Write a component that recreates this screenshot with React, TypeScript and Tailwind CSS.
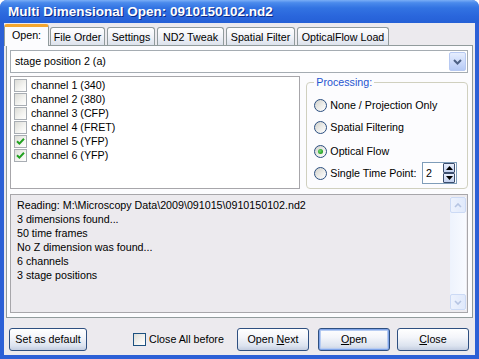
import React from "react";

function Check({ checked, dark }: { checked?: boolean; dark?: boolean }) {
  return (
    <div
      className={
        "w-[13px] h-[13px] shrink-0 border flex items-center justify-center bg-[linear-gradient(135deg,#DCDCD7_0%,#F4F4F1_60%,#FFFFFF_100%)] " +
        (dark ? "border-[#1C5180]" : "border-[#A8ADB3]")
      }
    >
      {checked && (
        <svg width="9" height="9" viewBox="0 0 9 9">
          <polyline points="1,4.2 3.4,6.6 8,1.8" fill="none" stroke="#21A121" strokeWidth="2" />
        </svg>
      )}
    </div>
  );
}

function Radio({ checked }: { checked?: boolean }) {
  return (
    <div className="w-[13px] h-[13px] shrink-0 rounded-full border border-[#2A4E80] bg-[linear-gradient(135deg,#D0D0CA_0%,#EDEDEA_55%,#FFFFFF_100%)] flex items-center justify-center">
      {checked && (
        <div className="w-[5px] h-[5px] rounded-full bg-[radial-gradient(circle_at_40%_40%,#73DC73_0%,#2CA52C_60%,#168C16_100%)]" />
      )}
    </div>
  );
}

function Btn({ children, w, def }: { children: React.ReactNode; w: string; def?: boolean }) {
  return (
    <div
      className={
        "h-[23px] shrink-0 rounded-[3px] border border-[#2E4F80] flex items-center justify-center text-[10.7px] text-black bg-[linear-gradient(to_bottom,#FFFFFF_0%,#F3F5FA_40%,#DCE3EF_80%,#C3CDE0_100%)] " +
        w +
        (def ? " shadow-[inset_0_0_0_1px_#7FA4E8,inset_0_0_0_2px_#B7CCF2]" : "")
      }
    >
      {children}
    </div>
  );
}

const tabs = [
  { label: "File Order", w: "w-[55px]" },
  { label: "Settings", w: "w-[48px]" },
  { label: "ND2 Tweak", w: "w-[67px]" },
  { label: "Spatial Filter", w: "w-[69px]" },
  { label: "OpticalFlow Load", w: "w-[92px]" },
];

const channels = [
  { label: "channel 1 (340)", c: false },
  { label: "channel 2 (380)", c: false },
  { label: "channel 3 (CFP)", c: false },
  { label: "channel 4 (FRET)", c: false },
  { label: "channel 5 (YFP)", c: true },
  { label: "channel 6 (YFP)", c: true },
];

const log = [
  "Reading: M:\\Microscopy Data\\2009\\091015\\0910150102.nd2",
  "3 dimensions found...",
  "50 time frames",
  "No Z dimension was found...",
  "6 channels",
  "3 stage positions",
];

export default function App() {
  return (
    <div className="w-[479px] h-[359px] bg-[#2C60D6] rounded-t-[7px] flex flex-col overflow-hidden font-['Liberation_Sans',Arial,sans-serif] text-black">
      <div className="h-[23px] shrink-0 flex items-center pl-[8px] bg-[linear-gradient(to_bottom,#7AAEF6_0%,#4A8AEC_12%,#3273E2_35%,#2A66DC_70%,#2560D6_100%)]">
        <span className="text-white font-bold text-[13.5px] leading-none [text-shadow:1px_1px_0_#0A2A8A]">
          Multi Dimensional Open: 0910150102.nd2
        </span>
      </div>
      <div className="flex-1 mx-[4px] mb-[4px] bg-[#ECEAEE] flex flex-col pt-[1px] px-[2px]">
        {/* tabs */}
        <div className="h-[21px] shrink-0 flex items-end gap-[2px] relative z-10">
          <div className="w-[45px] h-[22px] ml-[-2px] mr-[-1px] mb-[-1px] rounded-t-[3px] border-x border-[#919B9C] border-t-[3px] border-t-[#F5A62F] bg-[#FCFCFE] flex items-center justify-center text-[10.7px] pb-[2px]">
            Open:
          </div>
          {tabs.map((t) => (
            <div
              key={t.label}
              className={
                "h-[18px] rounded-t-[3px] border border-b-0 border-[#919B9C] bg-[linear-gradient(to_bottom,#FFFFFF_0%,#F1F3F8_50%,#DCE2EC_100%)] flex items-center justify-center text-[10.7px] pt-[1px] whitespace-nowrap " +
                t.w
              }
            >
              {t.label}
            </div>
          ))}
        </div>
        {/* panel */}
        <div className="h-[273px] shrink-0 border border-[#919B9C] bg-[#FCFCFE] pt-[4px] pl-[3px] pr-[4px] flex flex-col">
          <div className="h-[23px] shrink-0 border border-[#A5ACB2] bg-white flex items-center pl-[4px] pr-[1px] text-[10.7px]">
            <span className="flex-1">stage position 2 (a)</span>
            <div className="w-[17px] h-[19px] rounded-[2px] border border-[#B7C9F2] bg-[linear-gradient(to_bottom,#E6EEFE_0%,#C9D8FA_60%,#B6CAF5_100%)] flex items-center justify-center">
              <svg width="9" height="6" viewBox="0 0 9 6">
                <polyline points="1,1 4.5,4.5 8,1" fill="none" stroke="#4D6185" strokeWidth="2" />
              </svg>
            </div>
          </div>
          <div className="h-[113px] mt-[3px] shrink-0 flex">
            <div className="w-[291px] h-full border border-[#A7A6AA] bg-white pt-[1px] pl-[3px]">
              {channels.map((ch) => (
                <div key={ch.label} className="h-[14px] flex items-center gap-[4px] text-[10.7px]">
                  <Check checked={ch.c} />
                  <span>{ch.label}</span>
                </div>
              ))}
            </div>
            <fieldset className="ml-[6px] w-[162px] h-full border border-[#D0D0BF] rounded-[4px] pl-[7px] pr-[10px]">
              <legend className="px-[2px] text-[10.7px] text-[#1F55D0] leading-[13px]">Processing:</legend>
              <div className="mt-[5px] h-[22px] flex items-center gap-[3px] text-[10.7px] whitespace-nowrap">
                <Radio />
                <span>None / Projection Only</span>
              </div>
              <div className="h-[22px] flex items-center gap-[3px] text-[10.7px] whitespace-nowrap">
                <Radio />
                <span>Spatial Filtering</span>
              </div>
              <div className="mt-[2px] h-[22px] flex items-center gap-[3px] text-[10.7px] whitespace-nowrap">
                <Radio checked />
                <span>Optical Flow</span>
              </div>
              <div className="h-[22px] flex items-center gap-[3px] text-[10.7px] whitespace-nowrap">
                <Radio />
                <span>Single Time Point:</span>
                <div className="ml-auto w-[35px] h-[22px] shrink-0 border border-[#7F9DB9] bg-white flex items-center pl-[3px] pr-[1px]">
                  <span className="flex-1 text-[10.7px]">2</span>
                  <div className="w-[12px] h-[20px] flex flex-col">
                    <div className="flex-1 border border-[#3C4E6E] rounded-[1px] bg-[linear-gradient(to_bottom,#E8EEFB,#C3D1EE)] flex items-center justify-center">
                      <svg width="7" height="4" viewBox="0 0 7 4">
                        <polygon points="0,4 3.5,0 7,4" fill="#000" />
                      </svg>
                    </div>
                    <div className="flex-1 border border-[#3C4E6E] rounded-[1px] bg-[linear-gradient(to_bottom,#E8EEFB,#C3D1EE)] flex items-center justify-center">
                      <svg width="7" height="4" viewBox="0 0 7 4">
                        <polygon points="0,0 3.5,4 7,0" fill="#000" />
                      </svg>
                    </div>
                  </div>
                </div>
              </div>
            </fieldset>
          </div>
          <div className="h-[119px] mt-[5px] shrink-0 border border-[#A7A6AA] bg-[#ECEAEE] flex">
            <div className="flex-1 pt-[3px] pl-[6px] text-[10.7px] leading-[14px]">
              {log.map((l) => (
                <div key={l} className="whitespace-nowrap">
                  {l}
                </div>
              ))}
            </div>
            <div className="w-[16px] my-[2px] mr-[1px] flex flex-col bg-[linear-gradient(to_right,#EEF3FD,#F8FAFF)]">
              <div className="h-[16px] rounded-[2px] border border-[#CCDAF5] bg-[linear-gradient(to_right,#EDF2FD,#E0E9FB)] flex items-center justify-center">
                <svg width="8" height="5" viewBox="0 0 8 5">
                  <polyline points="1,4 4,1 7,4" fill="none" stroke="#B5C4E2" strokeWidth="1.6" />
                </svg>
              </div>
              <div className="flex-1" />
              <div className="h-[16px] rounded-[2px] border border-[#CCDAF5] bg-[linear-gradient(to_right,#EDF2FD,#E0E9FB)] flex items-center justify-center">
                <svg width="8" height="5" viewBox="0 0 8 5">
                  <polyline points="1,1 4,4 7,1" fill="none" stroke="#B5C4E2" strokeWidth="1.6" />
                </svg>
              </div>
            </div>
          </div>
        </div>
        {/* bottom bar */}
        <div className="flex-1 flex items-start pt-[10px] pl-[3px] pr-[4px]">
          <Btn w="w-[78px]">Set as default</Btn>
          <div className="ml-[46px] h-[23px] flex items-center gap-[3px] text-[10.7px]">
            <Check dark />
            <span>Close All before</span>
          </div>
          <div className="ml-auto flex">
            <Btn w="w-[72px]">
              <span>
                Open <span className="underline">N</span>ext
              </span>
            </Btn>
            <div className="ml-[9px]">
              <Btn w="w-[72px]" def>
                <span>
                  <span className="underline">O</span>pen
                </span>
              </Btn>
            </div>
            <div className="ml-[7px]">
              <Btn w="w-[72px]">
                <span>
                  <span className="underline">C</span>lose
                </span>
              </Btn>
            </div>
          </div>
        </div>
      </div>
    </div>
  );
}
